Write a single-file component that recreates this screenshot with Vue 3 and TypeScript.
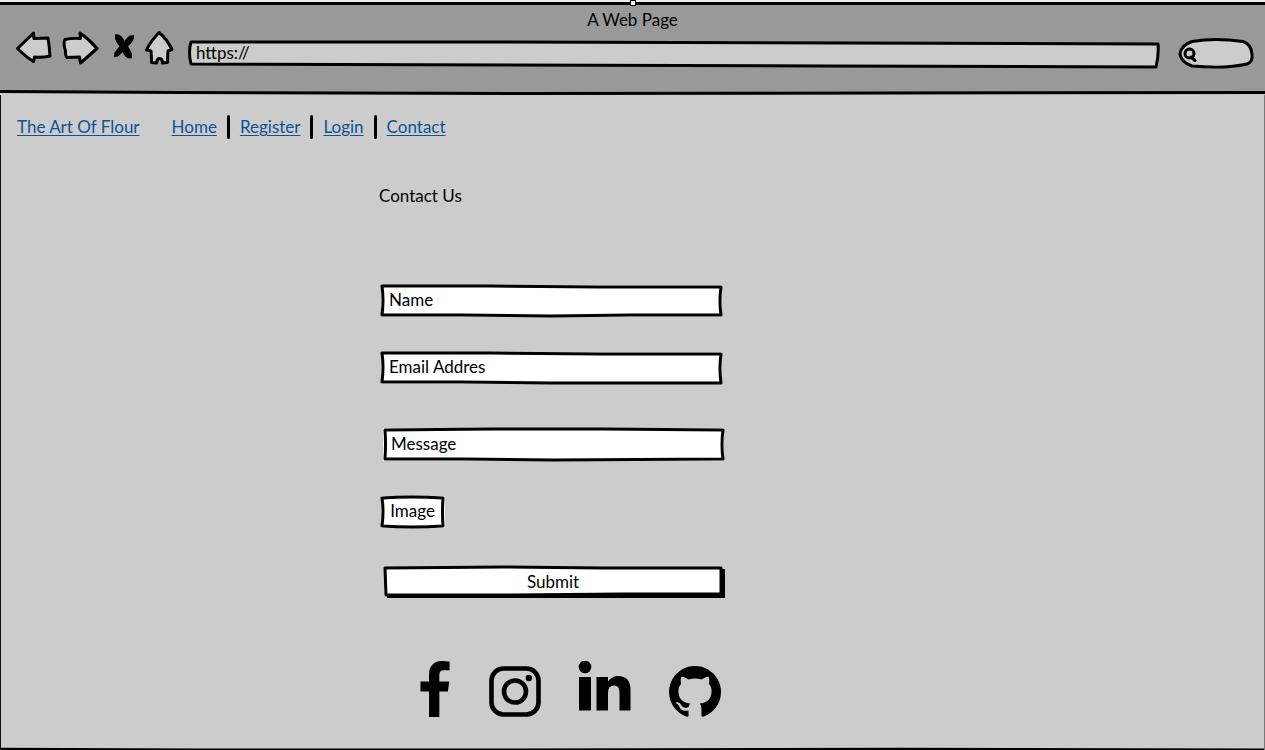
<script setup lang="ts">
import { ref } from 'vue'

interface NavLink {
  label: string
  href: string
}

const links: NavLink[] = [
  { label: 'Home', href: '#home' },
  { label: 'Register', href: '#register' },
  { label: 'Login', href: '#login' },
  { label: 'Contact', href: '#contact' },
]

const address = ref('https://')
const search = ref('')
const fullName = ref('Name')
const email = ref('Email Addres')
const message = ref('Message')
</script>

<template>
  <div class="page">
    <header class="browser">
      <span class="handle"></span>
      <div class="title">A Web Page</div>
      <div class="toolbar">
        <button type="button" class="tool back" aria-label="Back">
          <svg viewBox="16 30 36 36" width="36" height="36">
            <path class="ink" d="M17.500 48.500 L33.500 33 L34 38.500 L48 38 Q49.500 47 50 56 Q42 58 34.500 57 L33.500 61.500 Q26 57 17.500 48.500 Z" />
          </svg>
        </button>
        <button type="button" class="tool forward" aria-label="Forward">
          <svg viewBox="62 30 37 36" width="37" height="36">
            <path class="ink" d="M65 39.500 Q71 38 80.500 38.500 L80 33 Q90 40 97 48.500 L80.500 63 L79.500 57 L67 57.500 Q65 56 65.500 51 Q63 43 65 39.500 Z" />
          </svg>
        </button>
        <button type="button" class="tool stop" aria-label="Stop">
          <svg viewBox="112 30 24 36" width="24" height="36">
            <path d="M115 34.500 Q121 33 124.500 41 Q128 35 134 35 Q134.500 41 128 46.500 Q132.500 52 132 58 Q126 60 122.500 52 Q119 57 114 57 Q113.500 52 119.500 46.500 Q114 40 115 34.500 Z" />
            <path class="cross" d="M117 37 L130 56 M132 37 L116 55" />
          </svg>
        </button>
        <button type="button" class="tool home" aria-label="Home page">
          <svg viewBox="144 30 30 36" width="30" height="36">
            <path class="ink" d="M159 32.500 Q167 39 172 49.500 L168 51 Q167.500 57 167.500 62.500 L162.500 63 Q162.500 58.500 159.500 58.500 Q157 58.500 156.500 63 L151.500 62.500 Q151.500 57 151 51 L146.500 50 Q150 42 159 32.500 Z" />
          </svg>
        </button>
        <label class="sketch address">
          <svg viewBox="0 0 972 30" preserveAspectRatio="none" aria-hidden="true">
            <path class="ink" d="M3 3 L300 3 L971 5 Q972 16 969 28 L640 27 L3 25 Q0 13 3 3 Z" />
          </svg>
          <input v-model="address" type="text" aria-label="Address" />
        </label>
        <label class="sketch search">
          <svg viewBox="1178 36 76 34" preserveAspectRatio="none" aria-hidden="true">
            <path class="ink" d="M1192 41.500 Q1215 37.500 1243 41.500 Q1251 44 1252 54 Q1253 62 1247 64 Q1226 69 1192 66 Q1181 62 1180 54 Q1181 45 1192 41.500 Z" />
            <circle class="ink" cx="1189.500" cy="53.500" r="4.500" />
            <path class="ink" d="M1191 57 L1195 60.500" />
          </svg>
          <input v-model="search" type="text" aria-label="Search" />
        </label>
      </div>
      <svg class="rule" viewBox="0 0 1265 5" preserveAspectRatio="none" aria-hidden="true">
        <path class="below" d="M0 3 L400 3 L1265 3 V5 H0 Z" />
        <path d="M0 0 L180 1 L520 2 L1265 1 V4 L520 5 L180 4 L0 3 Z" />
      </svg>
    </header>

    <nav class="menu" aria-label="Main">
      <a class="brand" href="#">The Art Of Flour</a>
      <template v-for="(link, index) in links" :key="link.label">
        <span v-if="index > 0" class="divider"></span>
        <a :href="link.href">{{ link.label }}</a>
      </template>
    </nav>

    <main class="content">
      <h1>Contact Us</h1>
      <form @submit.prevent>
        <label class="sketch field name">
          <svg viewBox="0 0 342 34" preserveAspectRatio="none" aria-hidden="true">
            <path class="paper" d="M0 1 L341 1 V33 H0 Z" />
            <path class="ink" d="M1 2 L110 2 L220 3 L340 3 Q338 17 340 31 L250 31 L170 32 L80 31 L1 31 Q3 16 1 2 Z" />
          </svg>
          <input v-model="fullName" type="text" aria-label="Name" />
        </label>
        <label class="sketch field email">
          <svg viewBox="0 0 342 34" preserveAspectRatio="none" aria-hidden="true">
            <path class="paper" d="M0 1 H341 V33 H0 Z" />
            <path class="ink" d="M1 2 L110 2 L220 3 L340 3 Q338 17 340 32 L170 32 L80 31 L1 31 Q3 16 1 2 Z" />
          </svg>
          <input v-model="email" type="text" aria-label="Email address" />
        </label>
        <label class="sketch field message">
          <svg viewBox="0 0 342 34" preserveAspectRatio="none" aria-hidden="true">
            <path class="paper" d="M0 0 H341 V33 H0 Z" />
            <path class="ink" d="M2 2 L110 1 L220 1 L340 2 Q338 17 340 31 L170 32 L80 31 L2 31 Q3 16 2 2 Z" />
          </svg>
          <input v-model="message" type="text" aria-label="Message" />
        </label>
        <button type="button" class="sketch field image">
          <svg viewBox="0 0 65 34" preserveAspectRatio="none" aria-hidden="true">
            <path class="paper" d="M0 1 H64 V33 H0 Z" />
            <path class="ink" d="M1 3 Q30 1 62 3 Q61 17 62 31 Q32 33 1 31 Q3 16 1 3 Z" />
          </svg>
          <span>Image</span>
        </button>
        <button type="submit" class="sketch field submit">
          <svg viewBox="0 0 342 34" preserveAspectRatio="none" aria-hidden="true">
            <path d="M4 29 L337 29 L337 3 L342 3 V32 H4 Z" />
            <path class="ink" d="M2 2 L120 1 L220 2 L338 2 V28 L240 28 L130 29 L3 29 Z" />
          </svg>
          <span>Submit</span>
        </button>
      </form>

      <div class="social">
        <a href="#facebook" aria-label="Facebook">
          <svg viewBox="479 0 864 1664" width="30" height="56">
            <path d="M1343 12v264h-157q-86 0-116 36t-30 108v189h293l-39 296h-254v759h-306v-759h-255v-296h255v-218q0-186 104-288.500t277-102.500q147 0 228 12z" />
          </svg>
        </a>
        <a href="#instagram" aria-label="Instagram">
          <svg viewBox="0 0 54 56" width="54" height="56">
            <rect class="line" x="4.500" y="7.500" width="47" height="46" rx="12" />
            <circle class="line" cx="28" cy="30.500" r="11" />
            <circle cx="41.800" cy="17" r="3.200" />
          </svg>
        </a>
        <a href="#linkedin" aria-label="LinkedIn">
          <svg viewBox="0 0 54 56" width="54" height="56">
            <circle cx="7" cy="6" r="6.300" />
            <path d="M1 16 H13 V49.500 H1 Z M18.500 16 H30 V20.500 Q34 15 40 15 Q52.500 15 52.500 29 V49.500 H41.500 V31.500 Q41.500 24.500 36 24.500 Q30 24.500 30 31.500 V49.500 H18.500 Z" />
          </svg>
        </a>
        <a href="#github" aria-label="GitHub">
          <svg viewBox="128 -20 1536 1654" width="52" height="56">
            <path d="M896 128q209 0 385.500 103t279.500 279.500 103 385.500q0 251-146.500 451.500t-378.500 277.500q-27 5-40-7t-13-30q0-3 .5-76.500t.5-134.500q0-97-52-142 57-6 102.500-18t94-39 81-66.500 53-105 20.500-150.500q0-119-79-206 37-91-8-204-28-9-81 11t-92 44l-38 24q-93-26-192-26t-192 26q-16-11-42.500-27t-83.500-38.500-85-13.500q-45 113-8 204-79 87-79 206 0 85 20.500 150t52.500 105 80.500 67 94 39 102.500 18q-39 36-49 103-21 10-45 15t-57 5-65.500-21.500-55.500-62.500q-19-32-48.500-52t-49.500-24l-20-3q-21 0-29 4.500t-5 11.500 9 14 13 12l7 5q22 10 43.500 38t31.500 51l10 23q13 38 44 61.500t67 30 69.500 7 55.500-3.500l23-4q0 38 .5 88.500t.5 54.500q0 18-13 30t-40 7q-232-77-378.500-277.500t-146.500-451.500q0-209 103-385.500t279.500-279.500 385.500-103z" />
          </svg>
        </a>
      </div>
    </main>

    <svg class="floor" viewBox="0 0 1265 4" preserveAspectRatio="none" aria-hidden="true">
      <path d="M0 1 L200 2 L500 2 L900 1 L1265 2 V4 H0 Z" />
    </svg>
  </div>
</template>

<style>
body {
  margin: 0;
  background: #cccccc;
}
</style>

<style scoped>
.page {
  display: flex;
  flex-direction: column;
  box-sizing: border-box;
  min-height: 100vh;
  border-left: 1px solid #111;
  border-right: 1px solid #777;
  background: #cccccc;
  color: #000;
  font: 17px/20px Lato, "Liberation Sans", sans-serif;
}

svg {
  display: block;
}

.ink {
  fill: #cccccc;
  stroke: #000;
  stroke-width: 3px;
  stroke-linejoin: round;
  stroke-linecap: round;
}

.cross {
  fill: none;
  stroke: #000;
  stroke-width: 5px;
}

.paper {
  fill: #fff;
}

button {
  margin: 0;
  padding: 0;
  border: 0;
  background: none;
  color: inherit;
  font: inherit;
}

/* Browser chrome */
.browser {
  position: relative;
  margin: 0 -1px;
  border-top: 2px solid #eee;
  background: #999999;
  box-shadow: inset 0 3px #000;
}

.handle {
  position: absolute;
  top: -2px;
  left: 50%;
  box-sizing: border-box;
  width: 6px;
  height: 6px;
  margin-left: -3px;
  border: 1px solid #000;
  background: #fff;
}

.title {
  padding-top: 8px;
  text-align: center;
}

.toolbar {
  display: flex;
  align-items: flex-start;
  height: 40px;
  padding: 0 11px 0 16px;
}

.tool {
  flex: none;
}

.forward {
  margin-left: 10px;
}

.stop {
  margin-left: 13px;
}

.home {
  margin-left: 8px;
}

.sketch {
  display: grid;
  align-items: center;
}

.sketch > * {
  grid-area: 1 / 1;
  min-width: 0;
}

.sketch svg {
  width: 100%;
  height: 100%;
  overflow: visible;
}

.sketch input {
  box-sizing: border-box;
  width: 100%;
  margin: 0;
  padding: 0 8px;
  border: 0;
  outline: 0;
  background: none;
  color: inherit;
  font: inherit;
}

.address {
  flex: 1;
  height: 30px;
  margin: 9px 19px 0 14px;
}

.address input {
  padding-bottom: 3px;
}

.search {
  width: 76px;
  height: 34px;
  margin-top: 6px;
}

.search input {
  padding-left: 22px;
}

.rule {
  width: 100%;
  height: 5px;
  margin-top: 20px;
}

.below {
  fill: #cccccc;
}

/* Site navigation */
.menu {
  display: flex;
  align-items: center;
  gap: 10px;
  padding: 20px 16px 0;
}

.menu a {
  color: #0d5297;
  text-decoration: underline;
  text-underline-offset: 2px;
}

.brand {
  margin-right: 22px;
}

.divider {
  width: 3px;
  height: 24px;
  border-radius: 2px;
  background: #000;
}

/* Contact form */
.content {
  width: 346px;
  padding: 47px 0 0 378px;
}

h1 {
  margin: 0;
  font: inherit;
}

form {
  display: flex;
  flex-direction: column;
  align-items: flex-start;
  padding: 78px 0 0 2px;
}

.field {
  width: 342px;
  height: 34px;
}

.field .ink {
  fill: #fff;
}

.field input {
  padding-bottom: 2px;
}

.email {
  margin-top: 33px;
}

.message {
  margin: 43px 0 0 2px;
}

.image {
  width: 65px;
  margin-top: 33px;
}

.submit {
  margin: 37px 0 0 2px;
}

.field span {
  padding: 0 2px 3px 0;
  text-align: center;
}

/* Social links */
.social {
  display: flex;
  justify-content: space-between;
  padding: 61px 4px 0 41px;
}

.social a {
  color: #000;
}

.line {
  fill: none;
  stroke: #000;
  stroke-width: 4.6px;
}

.floor {
  width: 100%;
  height: 3px;
  margin-top: auto;
}
</style>
